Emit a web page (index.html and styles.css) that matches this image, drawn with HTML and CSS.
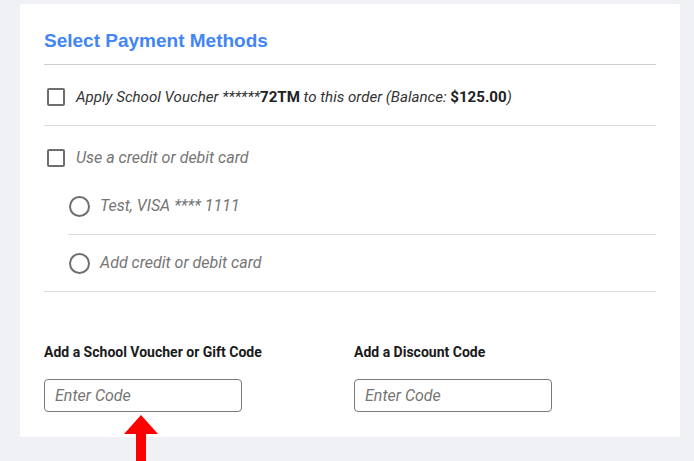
FILE: index.html
```html
<!DOCTYPE html>
<html>
<head>
<meta charset="utf-8">
<link rel="stylesheet" href="styles.css">
</head>
<body>
<div class="page">
  <div class="card">
    <div class="header"><h2 class="title">Select Payment Methods</h2></div>
    <div class="row voucher">
      <label class="check-line"><span class="checkbox"></span><span class="text dark">Apply School Voucher ******<b>72TM</b> to this order (Balance: <b>$125.00</b>)</span></label>
    </div>
    <div class="row cards">
      <label class="check-line"><span class="checkbox"></span><span class="text">Use a credit or debit card</span></label>
      <div class="radios">
        <div class="radio-item first"><span class="radio"></span><span class="text">Test, VISA **** 1111</span></div>
        <div class="radio-item last"><span class="radio"></span><span class="text">Add credit or debit card</span></div>
      </div>
    </div>
    <div class="codes">
      <div class="code-col">
        <div class="code-label">Add a School Voucher or Gift Code</div>
        <div class="code-input">Enter Code</div>
      </div>
      <div class="code-col">
        <div class="code-label">Add a Discount Code</div>
        <div class="code-input">Enter Code</div>
      </div>
    </div>
  </div>
  <svg class="arrow" width="34" height="46" viewBox="0 0 34 46"><polygon points="17,0 34,19 22,19 22,46 12,46 12,19 0,19" fill="#ff0000"/></svg>
</div>
</body>
</html>
```
FILE: styles.css
```css
html, body { margin: 0; padding: 0; }
body { background: #f0f1f5; font-family: Roboto, "Liberation Sans", sans-serif; }
.page { position: relative; width: 694px; height: 461px; overflow: hidden; }
.card {
  margin: 4px 0 0 20px;
  width: 612px;
  height: 433px;
  padding: 0 24px;
  background: #fff;
  border-radius: 2px;
}
.header { padding: 26px 0 12px; border-bottom: 1px solid #cfcfcf; }
.title {
  margin: 0;
  font-family: "Liberation Sans", Arial, sans-serif;
  font-weight: bold;
  font-size: 19px;
  line-height: 22px;
  color: #4285f4;
}
.row { border-bottom: 1px solid #dcdcdc; }
.voucher { padding: 22px 0 18px; }
.cards { padding: 22px 0 0; }
.check-line { display: flex; align-items: center; height: 20px; }
.checkbox {
  width: 14px; height: 14px;
  border: 2px solid #6e6e6e;
  border-radius: 2px;
  margin-left: 3px;
  margin-right: 11px;
  flex: none;
}
.text { font-style: italic; font-size: 16px; line-height: 20px; color: #757575; }
.text.dark { color: #333; font-size: 15.1px; }
.text b { color: #222; font-style: normal; font-weight: bold; }
.radios { margin-left: 24px; }
.radio-item { display: flex; align-items: center; height: 20px; }
.radio-item.first { padding: 28px 0 18px; border-bottom: 1px solid #dcdcdc; }
.radio-item.last { padding: 18px 0 18px; }
.radio {
  width: 17px; height: 17px;
  border: 2px solid #6e6e6e;
  border-radius: 50%;
  margin-left: 1px;
  margin-right: 10px;
  flex: none;
}
.codes { display: grid; grid-template-columns: 310px 1fr; padding-top: 50px; }
.code-label { font-weight: bold; font-size: 14px; line-height: 20px; color: #1a1a1a; }
.code-input {
  margin-top: 17px;
  width: 176px;
  height: 31px;
  padding: 0 10px;
  border: 1px solid #7a7a7a;
  border-radius: 4px;
  font-style: italic;
  font-size: 16px;
  line-height: 31px;
  color: #757575;
}
.arrow { position: absolute; left: 124px; top: 415px; }
```
